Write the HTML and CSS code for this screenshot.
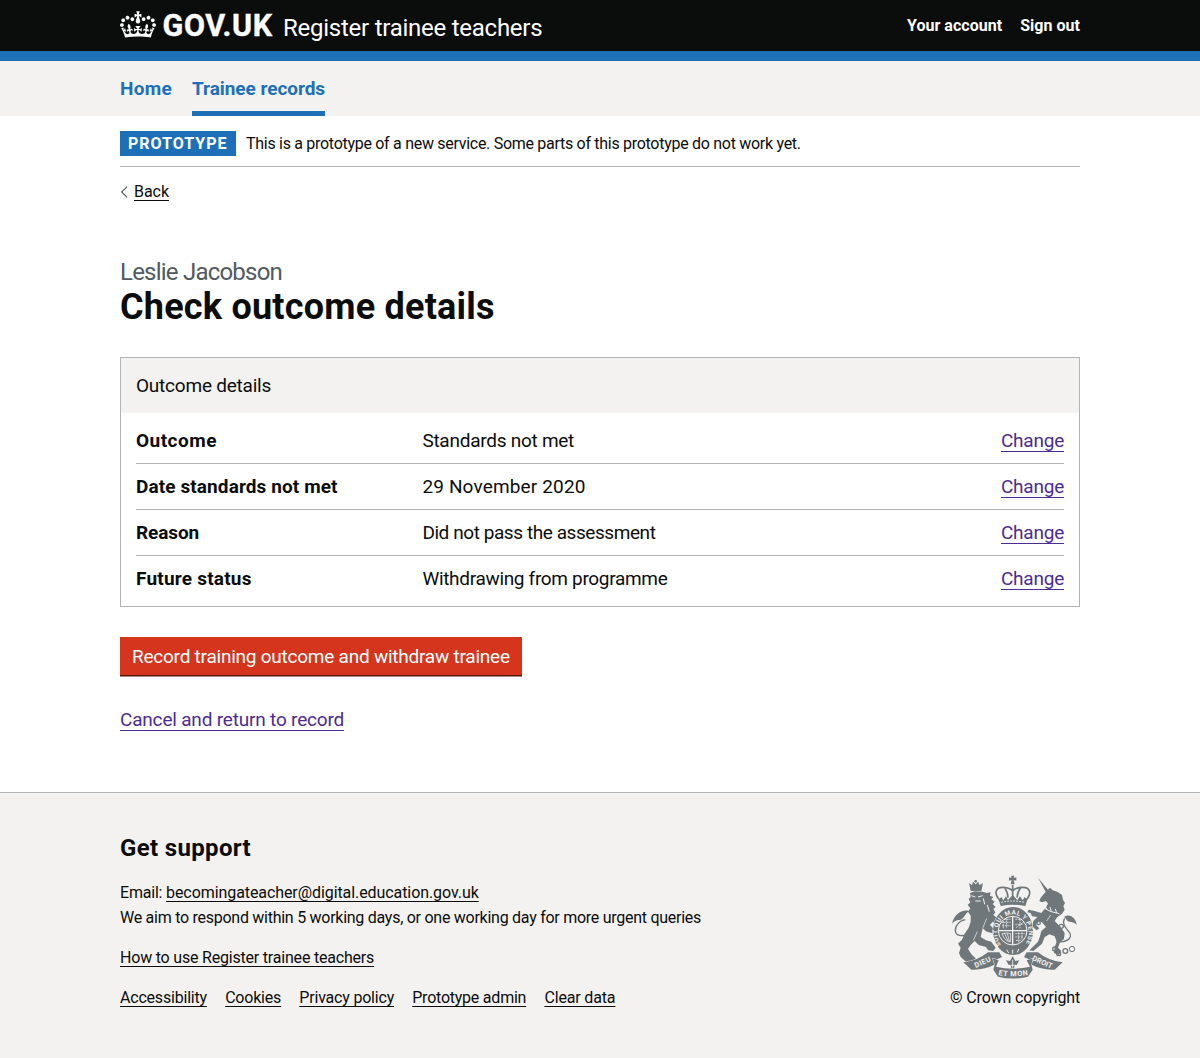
FILE: index.html
```html
<!DOCTYPE html>
<html lang="en">
<head>
<meta charset="utf-8">
<title>Check outcome details - Register trainee teachers - GOV.UK</title>
<link rel="stylesheet" href="styles.css">
</head>
<body>
<header class="header">
  <div class="container header__inner">
    <a class="header__brand" href="#">
      <svg class="header__crown" viewBox="0 0 132 97" aria-hidden="true"><path fill="currentColor" fill-rule="evenodd" d="M25 30.2c3.5 1.5 7.7-.2 9.1-3.7 1.5-3.6-.2-7.8-3.9-9.2-3.6-1.4-7.6.3-9.1 3.9-1.4 3.5.3 7.5 3.9 9zM9 39.5c3.6 1.5 7.8-.2 9.2-3.7 1.5-3.6-.2-7.8-3.9-9.1-3.6-1.5-7.6.2-9.1 3.8-1.4 3.5.3 7.5 3.8 9zM4.4 57.2c3.5 1.5 7.7-.2 9.1-3.8 1.5-3.6-.2-7.7-3.9-9.1-3.5-1.5-7.6.3-9.1 3.8-1.4 3.5.3 7.6 3.9 9.1zm38.3-21.4c3.5 1.5 7.7-.2 9.1-3.8 1.5-3.6-.2-7.7-3.9-9.1-3.6-1.5-7.6.3-9.1 3.8-1.3 3.6.4 7.7 3.9 9.1zm64.4-5.6c-3.6 1.5-7.8-.2-9.1-3.7-1.5-3.6.2-7.8 3.8-9.2 3.6-1.4 7.7.3 9.2 3.9 1.3 3.5-.4 7.5-3.9 9zm15.9 9.3c-3.6 1.5-7.7-.2-9.1-3.7-1.5-3.6.2-7.8 3.7-9.1 3.6-1.5 7.7.2 9.2 3.8 1.5 3.5-.3 7.5-3.8 9zm4.7 17.7c-3.6 1.5-7.8-.2-9.2-3.8-1.5-3.6.2-7.7 3.9-9.1 3.6-1.5 7.7.3 9.2 3.8 1.3 3.5-.4 7.6-3.9 9.1zM89.3 35.8c-3.6 1.5-7.8-.2-9.2-3.8-1.4-3.6.2-7.7 3.9-9.1 3.6-1.5 7.7.3 9.2 3.8 1.4 3.6-.3 7.7-3.9 9.1zM69.7 17.7l8.9 4.7V9.3l-8.9 2.8c-.2-.3-.5-.6-.9-.9L72.4 0H59.6l3.5 11.2c-.3.3-.6.5-.9.9l-8.8-2.8v13.1l8.8-4.7c.3.3.6.7.9.9l-5 15.4v.1c-.2.8-.4 1.6-.4 2.4 0 4.1 3.1 7.5 7 8.1h.2c.3 0 .7.1 1 .1.4 0 .7 0 1-.1h.2c4-.6 7.1-4.1 7.1-8.1 0-.8-.1-1.7-.4-2.4V34l-5.1-15.4c.4-.2.7-.6 1-.9zM66 92.8c16.9 0 32.8 1.1 47.1 3.2 4-16.9 8.9-26.7 14-33.5l-9.6-3.4c1 4.9 1.1 7.2 0 10.2-1.5-1.4-3-4.3-4.2-8.7L108.6 76c2.8-2 5-3.2 7.5-3.3-4.4 9.4-10 11.9-13.6 11.2-4.3-.8-6.3-4.6-5.6-7.9 1-4.7 5.7-5.9 8-.5 4.3-8.7-3-11.4-7.6-8.8 7.1-7.2 7.9-13.5 2.1-21.1-8 6.1-8.1 12.3-4.5 20.8-4.7-5.4-12.1-2.5-9.5 6.2 3.4-5.2 7.9-2 7.2 3.1-.6 4.3-6.4 7.8-13.5 7.2-10.3-.9-10.9-8-11.2-13.8 2.5-.5 7.1 1.8 11 7.3L80.2 60c-4.1 4.4-8 5.3-12.3 5.4 1.4-4.4 8-11.6 8-11.6H55.5s6.4 7.2 7.9 11.6c-4.2-.1-8-1-12.3-5.4l1.4 16.4c3.9-5.5 8.5-7.7 10.9-7.3-.3 5.8-.9 12.8-11.1 13.8-7.2.6-12.9-2.9-13.5-7.2-.7-5 3.8-8.3 7.1-3.1 2.7-8.7-4.6-11.6-9.4-6.2 3.7-8.5 3.6-14.7-4.6-20.8-5.8 7.6-5 13.9 2.2 21.1-4.7-2.6-11.9.1-7.7 8.8 2.3-5.5 7.1-4.2 8.1.5.7 3.3-1.3 7.1-5.7 7.9-3.5.7-9-1.8-13.5-11.2 2.5.1 4.7 1.3 7.5 3.3l-4.7-15.4c-1.2 4.4-2.7 7.2-4.3 8.7-1.1-3-.9-5.3 0-10.2l-9.5 3.4c5 6.9 9.9 16.7 14 33.5 14.8-2.1 30.8-3.2 47.7-3.2z"/></svg>
      <span class="header__logotype">GOV.UK</span>
      <span class="header__service">Register trainee teachers</span>
    </a>
    <nav class="header__account">
      <a class="header__link" href="#">Your account</a>
      <a class="header__link" href="#">Sign out</a>
    </nav>
  </div>
</header>

<nav class="nav">
  <div class="container nav__inner">
    <a class="nav__link nav__link--home" href="#">Home</a>
    <a class="nav__link nav__link--current" href="#">Trainee records</a>
  </div>
</nav>

<div class="container">
  <div class="phase">
    <strong class="phase__tag">PROTOTYPE</strong>
    <span class="phase__text">This is a prototype of a new service. Some parts of this prototype do not work yet.</span>
  </div>
  <div class="back">
    <svg class="back__arrow" viewBox="0 0 8 12" aria-hidden="true"><path d="M7.2.6 1.6 6l5.6 5.4" fill="none" stroke="#505a5f" stroke-width="1.1"/></svg>
    <a class="link link--text back__link" href="#">Back</a>
  </div>

  <main class="main">
    <div class="caption">Leslie Jacobson</div>
    <h1 class="title">Check outcome details</h1>

    <section class="card">
      <h2 class="card__title">Outcome details</h2>
      <dl class="summary">
        <div class="summary__row">
          <dt class="summary__key summary__key--outcome">Outcome</dt>
          <dd class="summary__value">Standards not met</dd>
          <dd class="summary__action"><a class="link" href="#">Change</a></dd>
        </div>
        <div class="summary__row">
          <dt class="summary__key">Date standards not met</dt>
          <dd class="summary__value summary__value--date">29 November 2020</dd>
          <dd class="summary__action"><a class="link" href="#">Change</a></dd>
        </div>
        <div class="summary__row">
          <dt class="summary__key summary__key--reason">Reason</dt>
          <dd class="summary__value summary__value--reason">Did not pass the assessment</dd>
          <dd class="summary__action"><a class="link" href="#">Change</a></dd>
        </div>
        <div class="summary__row">
          <dt class="summary__key summary__key--status">Future status</dt>
          <dd class="summary__value summary__value--status">Withdrawing from programme</dd>
          <dd class="summary__action"><a class="link" href="#">Change</a></dd>
        </div>
      </dl>
    </section>

    <button class="button" type="submit">Record training outcome and withdraw trainee</button>
    <div class="cancel"><a class="link" href="#">Cancel and return to record</a></div>
  </main>
</div>

<footer class="footer">
  <div class="container footer__inner">
    <div class="footer__support">
      <h2 class="footer__heading">Get support</h2>
      <div class="footer__block">
        <div class="footer__line"><span class="footer__label">Email: </span><a class="link link--text footer__email" href="#">becomingateacher@digital.education.gov.uk</a></div>
        <div class="footer__line footer__line--response">We aim to respond within 5 working days, or one working day for more urgent queries</div>
      </div>
      <div class="footer__block"><a class="link link--text" href="#">How to use Register trainee teachers</a></div>
      <div class="footer__block footer__links">
        <a class="link link--text" href="#">Accessibility</a>
        <a class="link link--text" href="#">Cookies</a>
        <a class="link link--text" href="#">Privacy policy</a>
        <a class="link link--text footer__admin" href="#">Prototype admin</a>
        <a class="link link--text footer__clear" href="#">Clear data</a>
      </div>
    </div>
    <div class="footer__copyright">
      <svg class="crest" viewBox="30 30 390 312" aria-hidden="true">
        <defs>
          <path id="garter" d="M183 240A47 56 0 1 1 255 240"/>
          <path id="motto" d="M172 329Q218 339 268 329"/>
        </defs>
        <g fill="#6f777b">
          <!-- lion -->
          <path d="M87 54 96 60 99 50 107 58 115 50 118 60 129 55 124 78H92z"/>
          <circle cx="107" cy="49" r="4"/>
          <path d="M90 84 104 79 128 80 140 84 152 82 150 92 160 96 154 103 164 110 158 117 167 126 160 132 166 142 160 150 172 160 176 172 168 178 158 170 150 180 158 188 176 194 186 206 176 213 156 204 140 200 128 190 122 216 138 226 154 230 167 248 160 258 144 256 138 246 116 240 104 228 92 240 84 252 96 270 107 280 100 291 78 290 62 276 57 264 62 248 54 236 66 224 74 206 86 188 92 170 92 152 84 140 91 130 83 120 91 112 86 102 92 96z"/>
          <path d="M88 138C66 132 42 148 36 176 46 164 54 166 62 164 74 160 74 146 88 138z"/>
          <!-- unicorn -->
          <path d="M294 38 330 82 321 88z"/>
          <path d="M330 68 338 76 352 80 366 90 369 104 375 114 370 124 374 134 366 146 352 156 344 168 362 186 374 204 372 222 360 232 354 248 364 258 356 270 342 264 344 246 350 230 344 214 328 208 314 216 306 236 292 248 280 258 268 256 282 242 294 230 300 214 304 198 318 186 306 172 296 168 288 180 298 190 290 196 276 184 280 168 292 156 276 154 272 144 262 142 266 134 284 138 304 144 316 130 324 116 318 108 306 112 298 108 302 98 312 86 322 76z"/>
          <path d="M372 156C390 144 408 160 410 180 402 170 396 172 388 170 378 168 380 160 372 156z"/>
          <!-- crown -->
          <path d="M213 32h10l-2 7 8-2v10l-8-2 3 13h-12l3-13-8 2V37l8 2z"/>
          <path d="M176 104 184 96 190 106 198 94 204 105 218 90 232 105 240 94 248 106 254 96 262 104 256 123Q218 115 182 123z"/>
        </g>
        <!-- ribbons and shield, each edged so that it stands clear of the supporters -->
        <g fill="#6f777b" stroke="#f3f2f1" stroke-width="3" paint-order="stroke">
          <path d="M70 292Q112 288 144 262L178 262 186 276 166 286 158 280 166 298Q132 316 94 314z"/>
          <path d="M368 292Q326 288 294 262L260 262 252 276 272 286 280 280 272 298Q306 316 344 314z"/>
          <path d="M158 280 176 286 168 305Q218 317 270 305L260 286 280 280 274 298 278 314 264 335Q218 346 174 335L160 314 164 298z"/>
          <ellipse cx="219" cy="198" rx="60" ry="72"/>
        </g>
        <path fill="#6f777b" d="M218 274 226 288 238 286 230 300 224 301 222 310H214L212 301 206 300 198 286 210 288z"/>
        <g fill="none" stroke="#6f777b" stroke-width="4">
          <path d="M68 234C90 214 76 210 62 212 42 210 42 190 54 176Q62 166 76 164"/>
          <path d="M350 228C374 236 402 220 388 202 378 190 364 176 374 160"/>
          <path d="M182 108C158 84 168 66 190 67Q210 68 218 78 226 68 246 67C270 66 278 84 256 108M218 60V96M194 68Q204 84 204 98M242 68Q230 84 232 98" stroke-width="5"/>
          <circle cx="296" cy="174" r="5"/><circle cx="364" cy="184" r="6"/><circle cx="362" cy="210" r="6"/><circle cx="344" cy="252" r="6"/><circle cx="356" cy="266" r="6"/><circle cx="376" cy="258" r="7"/><circle cx="396" cy="252" r="8" stroke-width="3"/>
        </g>
        <g fill="none" stroke="#f3f2f1">
          <circle cx="218" cy="197" r="43" stroke-width="3"/>
          <path d="M218 154V240M175 197H261" stroke-width="4"/>
          <path d="M184 172H212M186 182H212M192 163H212M200 158V190M190 168V190M226 163H246M226 178H250M240 162V190M228 188 252 170M226 206H254M226 216H250M228 226H244M236 202V232M246 202V224" stroke-width="2.2" stroke-dasharray="6 2"/>
          <path d="M186 206Q200 202 212 206V230Q194 230 186 206M194 206 204 228M202 205 208 228" stroke-width="2.4"/>
          <path d="M200 254 206 264M218 254V266M236 252 232 262" stroke-width="3"/>
          <path d="M310 128Q330 142 358 146M316 122 320 134M330 126 334 140M346 132 350 144M94 92 106 96M114 96 128 92M106 108H122M130 100 134 118M142 120 148 140" stroke-width="3"/>
          <path d="M128 190 140 160M100 226 112 200M332 150 320 168" stroke-width="2"/>
          <path d="M184 112Q218 104 254 112" stroke-width="3" stroke-dasharray="5 4"/>
          <path d="M218 284V308M208 301H228" stroke-width="2.5"/>
        </g>
        <g class="crest__text">
          <text font-size="19"><textPath href="#garter" textLength="232" lengthAdjust="spacing">SOIT QUI MAL Y PENSE</textPath></text>
          <text font-size="22" transform="translate(107 309) rotate(-24)" textLength="52">DIEU</text>
          <text font-size="22"><textPath href="#motto" startOffset="3" textLength="90">ET MON</textPath></text>
          <text font-size="22" transform="translate(275 285) rotate(24)" textLength="64">DROIT</text>
        </g>
      </svg>
      <span>© Crown copyright</span>
    </div>
  </div>
</footer>
</body>
</html>
```
FILE: styles.css
```css
* { box-sizing: border-box; }

body {
  margin: 0;
  background: #fff;
  color: #0b0c0c;
  font-family: Roboto, "Liberation Sans", sans-serif;
  font-size: 19px;
  line-height: 25px;
  letter-spacing: -0.2px;
}

h1, h2, dl, dd { margin: 0; }

.container { width: 960px; margin: 0 auto; }

.link {
  color: #4c2c92;
  text-decoration: underline;
  text-decoration-thickness: 1px;
  text-underline-offset: 4px;
  text-decoration-skip-ink: none;
}
.link--text { color: #0b0c0c; text-underline-offset: 3px; }

/* Header */
.header { height: 61px; background: #0b0c0c; border-bottom: 10px solid #1d70b8; }
.header__inner { display: flex; justify-content: space-between; }
.header__brand { display: flex; align-items: baseline; padding-top: 11px; color: #fff; text-decoration: none; }
.header__crown { width: 36px; height: 27px; margin-right: 6.5px; align-self: flex-start; }
.header__logotype { width: 120.5px; font-size: 30.5px; font-weight: 700; line-height: 30px; letter-spacing: 0.65px; -webkit-text-stroke: 0.4px #fff; }
.header__service { font-size: 24px; line-height: 30px; letter-spacing: -0.25px; }
.header__account { display: flex; gap: 18px; padding-top: 16px; }
.header__link { color: #fff; font-size: 16px; font-weight: 700; line-height: 20px; letter-spacing: 0.03px; text-decoration: none; }

/* Primary navigation */
.nav { height: 55px; background: #f3f2f1; }
.nav__inner { display: flex; gap: 20px; }
.nav__link { padding: 15px 0 10px; border-bottom: 5px solid transparent; color: #1d70b8; font-weight: 700; letter-spacing: -0.05px; text-decoration: none; }
.nav__link--home { letter-spacing: 0.28px; }
.nav__link--current { border-color: #1d70b8; }

/* Phase banner and back link */
.phase { display: flex; gap: 10px; padding: 15px 0 10px; border-bottom: 1px solid #b1b4b6; font-size: 16px; }
.phase__tag { width: 116px; padding-left: 8px; background: #1d70b8; color: #fff; font-weight: 700; letter-spacing: 1px; }
.phase__text { letter-spacing: -0.29px; }
.back { display: flex; align-items: center; gap: 6px; height: 20px; margin-top: 15px; font-size: 16px; line-height: 20px; }
.back__arrow { width: 8px; height: 12px; }
.back__link { letter-spacing: -0.04px; }

/* Page content */
.main { padding: 55px 0 60px; }
.caption { color: #505a5f; font-size: 24px; line-height: 30px; letter-spacing: -0.78px; }
.title { font-size: 36px; font-weight: 700; line-height: 40px; letter-spacing: 0.22px; }

.card { margin-top: 30px; border: 1px solid #b1b4b6; }
.card__title { padding: 15px; background: #f3f2f1; font-size: 19px; font-weight: 400; letter-spacing: -0.22px; }
.summary { padding: 5px 15px; }
.summary__row { display: grid; grid-template-columns: 286.4px 1fr auto; padding: 10px 0; border-bottom: 1px solid #b1b4b6; }
.summary__row:last-child { border-bottom: 0; }
.summary__key { font-weight: 700; letter-spacing: 0.1px; }
.summary__key--outcome { letter-spacing: 0.48px; }
.summary__key--reason { letter-spacing: -0.12px; }
.summary__key--status { letter-spacing: 0.21px; }
.summary__value { letter-spacing: -0.26px; }
.summary__value--date { letter-spacing: 0.15px; }
.summary__value--reason { letter-spacing: -0.43px; }
.summary__value--status { letter-spacing: -0.32px; }
.summary__action { letter-spacing: -0.23px; }

.button {
  display: block;
  width: 402px;
  height: 38px;
  margin: 30px 0 32px;
  padding: 1px 0 0 12px;
  border: 0;
  background: #d4351c;
  box-shadow: 0 1px #55150b, 0 2px #aa8a85;
  color: #fff;
  font: 400 19px/37px Roboto, "Liberation Sans", sans-serif;
  letter-spacing: -0.235px;
  text-align: left;
  white-space: nowrap;
}
.cancel { letter-spacing: -0.19px; }

/* Footer */
.footer { height: 266px; padding-top: 40px; border-top: 1px solid #b1b4b6; background: #f3f2f1; font-size: 16px; }
.footer__inner { display: flex; justify-content: space-between; align-items: flex-end; }
.footer__heading { margin-bottom: 17px; font-size: 24px; font-weight: 700; line-height: 30px; letter-spacing: 0.34px; }
.footer__block + .footer__block { margin-top: 15px; }
.footer__label { white-space: pre; }
.footer__email { letter-spacing: -0.08px; }
.footer__line--response { letter-spacing: -0.266px; }
.footer__links { display: flex; gap: 18.2px; }
.footer__admin { letter-spacing: -0.23px; }
.footer__clear { letter-spacing: -0.155px; }
.footer__copyright { display: flex; flex-direction: column; gap: 6px; width: 130px; letter-spacing: -0.146px; white-space: nowrap; }
.crest { display: block; width: 130px; height: 104px; }
.crest__text { fill: #f3f2f1; font-weight: 700; letter-spacing: 0; }
```
